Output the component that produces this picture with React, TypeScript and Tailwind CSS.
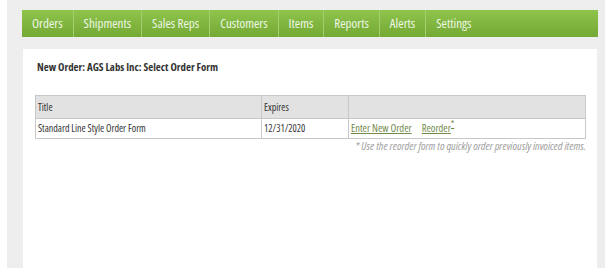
import React from 'react';

const navItems = ["Orders", "Shipments", "Sales Reps", "Customers", "Items", "Reports", "Alerts", "Settings"];

const App = () => {
  return (
    <div className="w-[605px] h-[268px] bg-white pl-[7px] overflow-hidden font-stretch-condensed" style={{ fontFamily: '"Open Sans", sans-serif' }}>
      <div className="h-full bg-[#eeeeee] pt-[10px] pl-[15px] pr-[7px] flex flex-col">
        <div className="h-[27px] flex bg-gradient-to-b from-[#8fc44c] to-[#73a934]">
          {navItems.map((item, idx) => (
            <div
              key={idx}
              className="px-[10px] flex items-center text-[13px] text-[#eef6e4] border-r border-[#a3cd6e] last:border-r-0"
            >
              {item}
            </div>
          ))}
        </div>
        <div className="mt-[12px] ml-px mr-px flex-1 bg-white pl-[12px] pr-[11px]">
          <h1 className="text-[10.8px] font-bold text-[#333] pt-[10px] pl-[2px] leading-[15px]">
            New Order: AGS Labs Inc: Select Order Form
          </h1>
          <table className="mt-[21px] w-full border-collapse text-[10px] text-[#333]">
            <thead>
              <tr className="bg-[#e2e2e2] h-[23px]">
                <th className="w-[226px] border border-[#c8c8c8] text-left font-normal px-[2px]">Title</th>
                <th className="w-[87px] border border-[#c8c8c8] text-left font-normal px-[2px]">Expires</th>
                <th className="border border-[#c8c8c8]"></th>
              </tr>
            </thead>
            <tbody>
              <tr className="h-[20px]">
                <td className="border border-[#c8c8c8] px-[2px]">Standard Line Style Order Form</td>
                <td className="border border-[#c8c8c8] px-[2px]">12/31/2020</td>
                <td className="border border-[#c8c8c8] px-[2px] text-[10.5px] text-[#72894a]">
                  <span className="underline">Enter New Order</span>
                  <span className="underline ml-[10px]">Reorder</span>
                  <sup className="text-[9px] underline">*</sup>
                </td>
              </tr>
            </tbody>
          </table>
          <p className="text-right italic text-[11.3px] text-[#a0a0a0] mt-0 leading-[14px]">
            * Use the reorder form to quickly order previously invoiced items.
          </p>
        </div>
      </div>
    </div>
  );
};

export default App;
